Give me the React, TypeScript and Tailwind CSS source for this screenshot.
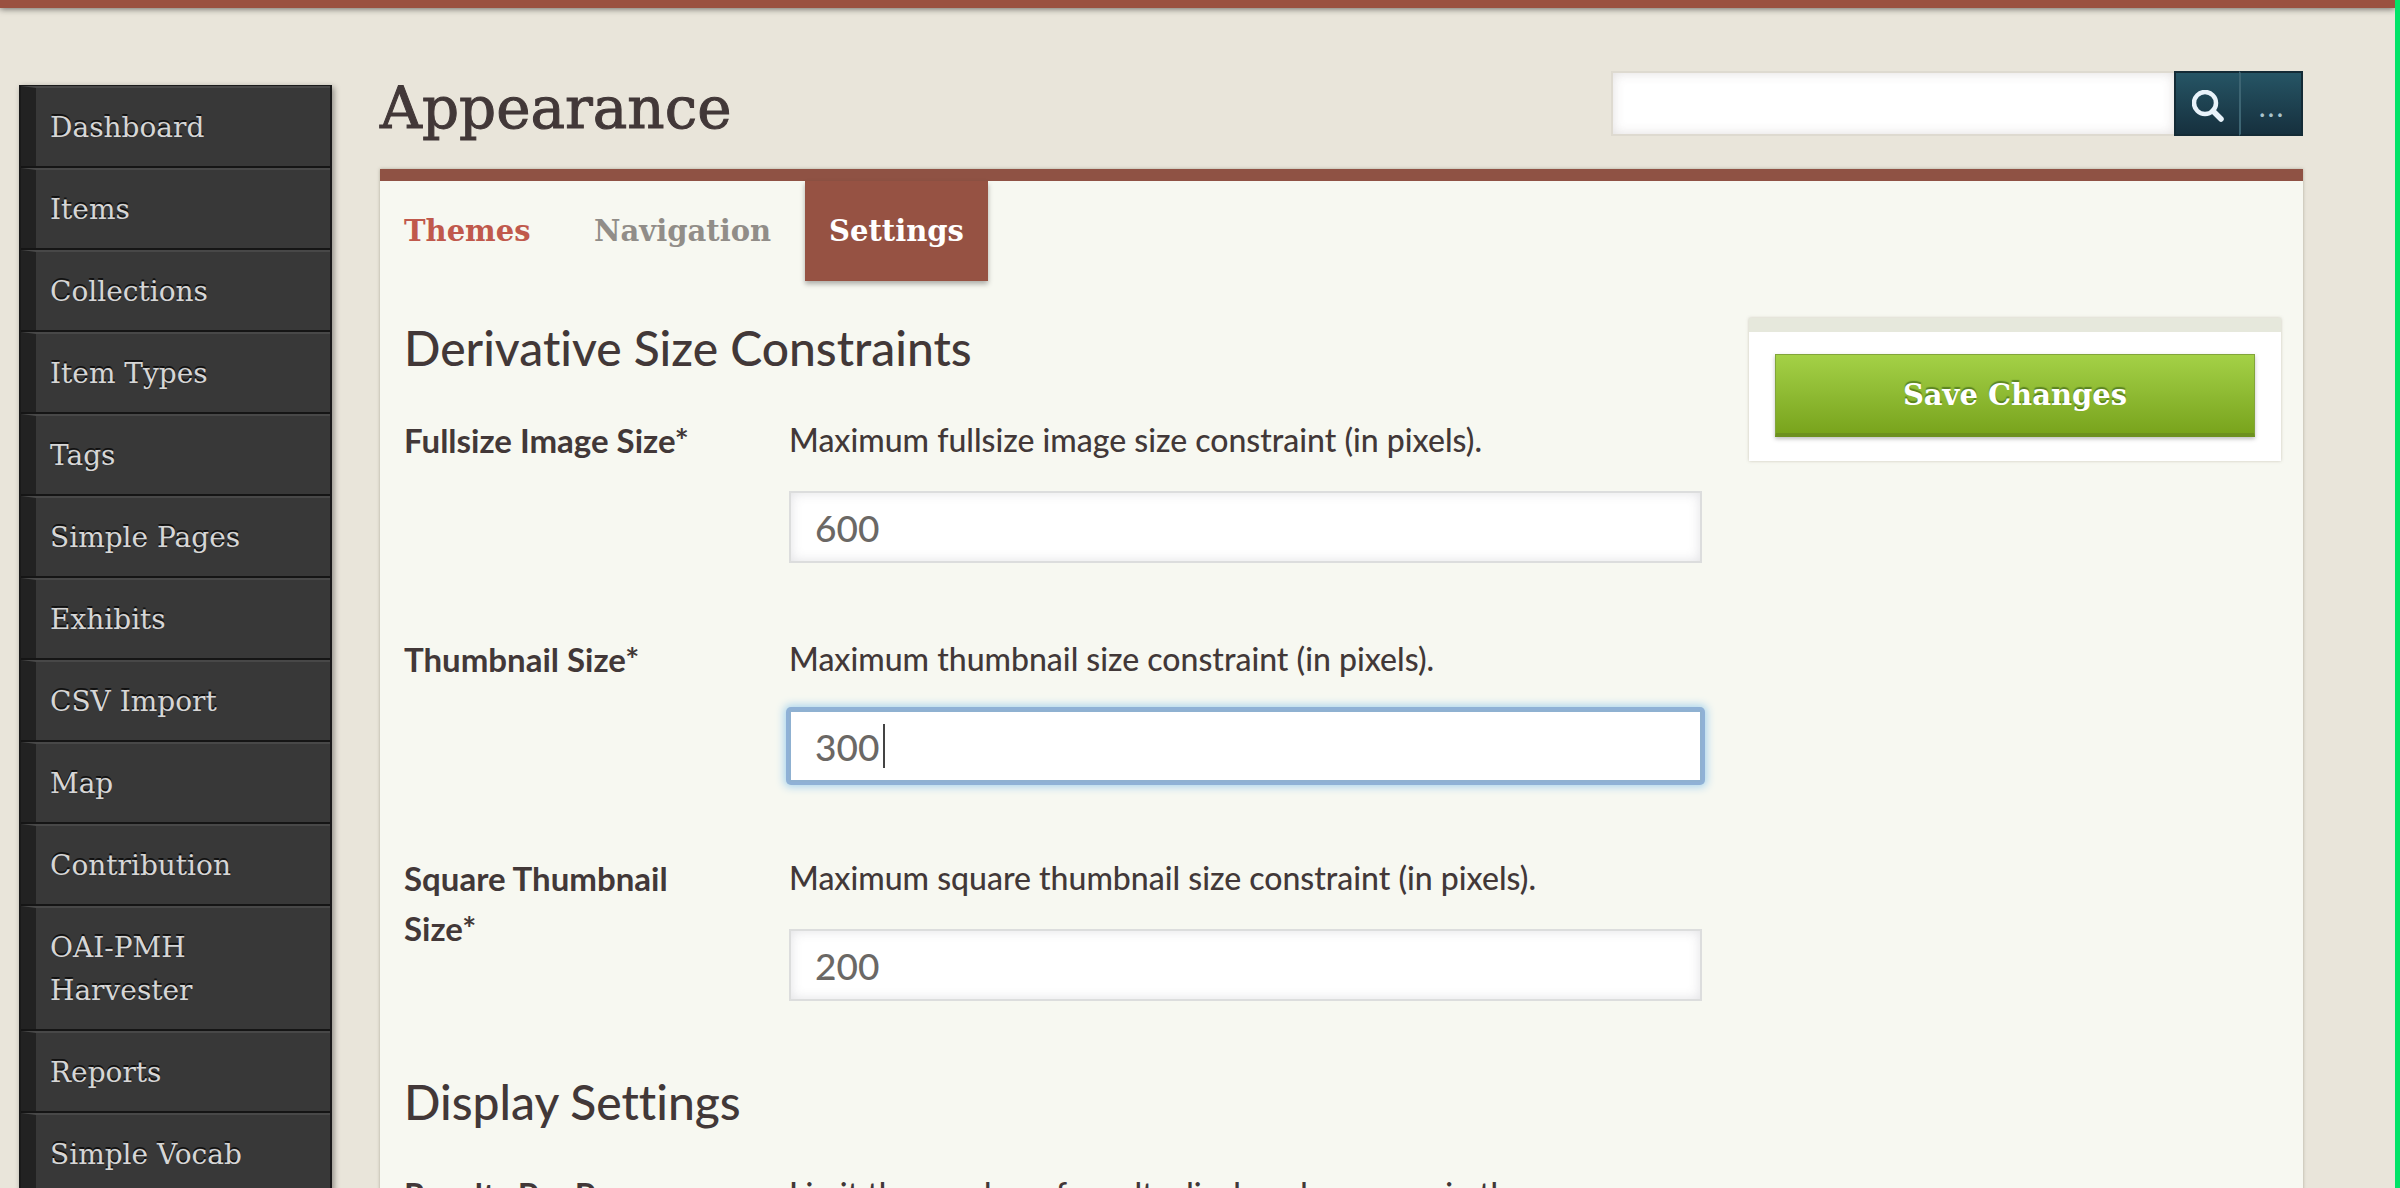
const sidebarItems = [
  'Dashboard', 'Items', 'Collections', 'Item Types', 'Tags', 'Simple Pages', 'Exhibits',
  'CSV Import', 'Map', 'Contribution', 'OAI-PMH Harvester', 'Reports', 'Simple Vocab',
];

function Sidebar() {
  return (
    <nav
      aria-label="Admin"
      className="w-[313px] shrink-0 self-start border-2 border-t border-[#1a1a1a] bg-[#383838] shadow-[2px_2px_6px_rgba(0,0,0,0.4)]"
    >
      <ul>
        {sidebarItems.map((item) => (
          <li key={item} className="border-b-2 border-[#151515]">
            <a
              href="#"
              className="block border-t-2 border-l-[15px] border-t-[#484848] border-l-[#222222] pt-[18px] pr-16 pb-[17px] pl-[14px] font-['DejaVu_Serif',serif] text-[28px] leading-[43px] text-[#d6d6d6] [text-shadow:0_-2px_0_#111]"
            >
              {item}
            </a>
          </li>
        ))}
      </ul>
    </nav>
  );
}

function SearchForm() {
  return (
    <form className="flex h-[65px] w-[692px]" onSubmit={(e) => e.preventDefault()}>
      <input
        type="text"
        aria-label="Search"
        className="min-w-0 flex-1 border-2 border-r-0 border-[#dedad0] bg-white px-4 text-[32px] shadow-[inset_0_0_12px_rgba(90,70,70,0.18)] outline-none"
      />
      <button
        type="submit"
        aria-label="Submit search"
        className="flex w-[65px] items-center justify-center border-2 border-r-0 border-[#142b36] bg-linear-to-b from-[#265565] to-[#16303e] pt-1"
      >
        <svg viewBox="0 0 32 32" className="size-8" fill="none" stroke="#e9f3fa" aria-hidden="true">
          <circle cx="13" cy="13" r="11" strokeWidth="4.5" />
          <path d="M21 21 29 29" strokeWidth="5.5" strokeLinecap="round" />
        </svg>
      </button>
      <button
        type="button"
        aria-label="Advanced search options"
        className="flex w-16 items-center justify-center border-2 border-[#142b36] border-l-[#3d6573] bg-linear-to-b from-[#265565] to-[#16303e] pt-2 font-['DejaVu_Serif',serif] text-[28px] leading-none text-[#a9c3cc]"
      >
        ...
      </button>
    </form>
  );
}

function Tabs() {
  return (
    <nav aria-label="Appearance" className="flex font-['DejaVu_Serif',serif] text-[29px] leading-[100px] font-bold">
      <a href="#" className="w-[190px] px-6 text-[#c0594c]">Themes</a>
      <a href="#" className="w-[235px] px-6 text-[#918d88]">Navigation</a>
      <a
        href="#"
        aria-current="page"
        className="w-[183px] bg-[#965243] text-center text-white shadow-[0_3px_5px_rgba(0,0,0,0.3)]"
      >
        Settings
      </a>
    </nav>
  );
}

type FieldProps = { id: string; label: string; help: string; value: string; active?: boolean };

function Field({ id, label, help, value, active }: FieldProps) {
  return (
    <div className="flex min-h-[219px] gap-12">
      <label htmlFor={id} className="w-[337px] shrink-0 text-[33px] leading-[50px] font-bold">
        {label}
      </label>
      <div className="min-w-0 flex-1">
        <p className="text-[32px] leading-[50px] whitespace-nowrap">{help}</p>
        <div className="relative mt-[26px]">
          <input
            id={id}
            type="text"
            defaultValue={value}
            className={
              active
                ? 'h-[72px] w-full rounded-xs border-2 border-[#8fb1d1] bg-white px-6 text-[37px] text-[#6b6865] caret-transparent shadow-[0_0_0_3px_#8fb1d6,0_0_8px_5px_#a9d4ee] outline-none'
                : 'h-[72px] w-full border-2 border-[#dcdddd] bg-white px-6 text-[37px] text-[#6b6865] shadow-[inset_0_0_12px_rgba(70,70,90,0.16)] outline-none'
            }
          />
          {active && <span className="absolute top-[14px] left-[94px] h-11 w-0.5 bg-[#444444]" />}
        </div>
      </div>
    </div>
  );
}

function SectionTitle({ children }: { children: string }) {
  return <h2 className="text-[48px] leading-[60px]">{children}</h2>;
}

export default function App() {
  return (
    <div className="h-screen overflow-hidden border-r-5 border-[#00e368] bg-[#e9e5da] font-['Lato',sans-serif] font-medium text-[#423838] [font-variant-ligatures:none]">
      <div className="h-2 bg-[#9a5140] shadow-[0_1px_6px_rgba(0,0,0,0.55)]" />
      <div className="flex gap-12 pt-[60px] pr-[92px] pl-[19px]">
        <div className="pt-[17px]">
          <Sidebar />
        </div>
        <main className="min-w-0 flex-1">
          <header className="flex items-start justify-between pt-[3px]">
            <h1 className="font-['DejaVu_Serif',serif] text-[58px] leading-[74px] font-normal [-webkit-text-stroke:1px_#423838]">Appearance</h1>
            <SearchForm />
          </header>
          <div className="mt-6 border-t-12 border-[#8f5244] bg-[#f7f8f1] shadow-[0_0_3px_rgba(120,110,90,0.5)]">
            <Tabs />
            <form className="flex gap-[47px] pt-[37px] pr-[22px] pb-10 pl-6" onSubmit={(e) => e.preventDefault()}>
              <div className="min-w-0 flex-1">
                <SectionTitle>Derivative Size Constraints</SectionTitle>
                <div className="pt-[37px]">
                  <Field id="fullsize" label="Fullsize Image Size*" help="Maximum fullsize image size constraint (in pixels)." value="600" />
                  <Field id="thumbnail" label="Thumbnail Size*" help="Maximum thumbnail size constraint (in pixels)." value="300" active />
                  <Field id="square" label="Square Thumbnail Size*" help="Maximum square thumbnail size constraint (in pixels)." value="200" />
                </div>
                <SectionTitle>Display Settings</SectionTitle>
                <div className="pt-[37px]">
                  <Field id="perpage" label="Results Per Page" help="Limit the number of results displayed per page in the" value="10" />
                </div>
              </div>
              <aside className="w-[532px] shrink-0 self-start border-t-14 border-[#e6e8dc] bg-white px-[26px] pt-[22px] pb-6 shadow-[0_0_3px_rgba(120,110,90,0.35)]">
                <button
                  type="submit"
                  className="h-[83px] w-full border border-b-4 border-[#82a53a] border-b-[#6d911f] bg-linear-to-b from-[#a4d146] to-[#79a41c] pt-1 font-['DejaVu_Serif',serif] text-[29px] font-bold text-white shadow-[0_2px_4px_rgba(0,0,0,0.25)] [text-shadow:0_-2px_1px_rgba(50,90,20,0.6)]"
                >
                  Save Changes
                </button>
              </aside>
            </form>
          </div>
        </main>
      </div>
    </div>
  );
}
